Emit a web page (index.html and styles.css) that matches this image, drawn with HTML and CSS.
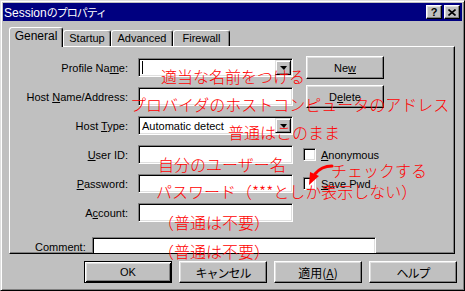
FILE: index.html
```html
<!DOCTYPE html>
<html lang="ja">
<head>
  <meta charset="UTF-8">
  <title>Sessionのプロパティ</title>
  <link rel="stylesheet" href="styles.css">
</head>
<body>
  <div class="window">
    <div class="titlebar">
      <span class="title">Session<span class="title-jp">のプロパティ</span></span>
      <div class="title-buttons">
        <span class="tbtn">?</span>
        <span class="tbtn">
          <svg width="8" height="7" viewBox="0 0 8 7"><path d="M0.5 0.5 L7.5 6.5 M7.5 0.5 L0.5 6.5" stroke="#000" stroke-width="1.6"/></svg>
        </span>
      </div>
    </div>

    <div class="tabs">
      <div class="tab active tab-general">General</div>
      <div class="tab tab-startup">Startup</div>
      <div class="tab tab-advanced">Advanced</div>
      <div class="tab tab-firewall">Firewall</div>
    </div>

    <div class="panel">
      <div class="form">
        <label>Profile Na<u>m</u>e:</label>
        <div class="field combo">
          <span class="caret"></span>
          <span class="value"></span>
          <span class="drop"><span class="arrow"></span></span>
        </div>
        <button class="btn side">Ne<u>w</u></button>

        <label>Host <u>N</u>ame/Address:</label>
        <div class="field"></div>
        <button class="btn side">D<u>e</u>lete</button>

        <label>Host <u>T</u>ype:</label>
        <div class="field combo">
          <span class="value">Automatic detect</span>
          <span class="drop"><span class="arrow"></span></span>
        </div>

        <label><u>U</u>ser ID:</label>
        <div class="field"></div>
        <div class="check side"><span class="box"></span><span><u>A</u>nonymous</span></div>

        <label><u>P</u>assword:</label>
        <div class="field"></div>
        <div class="check side"><span class="box"></span><span><u>S</u>ave Pwd</span></div>

        <label>A<u>c</u>count:</label>
        <div class="field"></div>
      </div>

      <div class="comment-row">
        <label>Comment:</label>
        <div class="field comment"></div>
      </div>
    </div>

    <div class="buttons">
      <button class="btn default">OK</button>
      <button class="btn jp">キャンセル</button>
      <button class="btn jp apply">適用(<u>A</u>)</button>
      <button class="btn jp">ヘルプ</button>
    </div>

    <!-- 手書きの注釈 -->
    <span class="note" style="left:160px; top:67px">適当な名前をつける</span>
    <span class="note" style="left:129px; top:95px">プロバイダのホストコンピュータのアドレス</span>
    <span class="note" style="left:227px; top:123px">普通はこのまま</span>
    <span class="note" style="left:157px; top:155px">自分のユーザー名</span>
    <span class="note" style="left:330px; top:161px">チェックする</span>
    <span class="note" style="left:155px; top:182px">パスワード（***としか表示しない）</span>
    <span class="note" style="left:157px; top:213px">（普通は不要）</span>
    <span class="note" style="left:157px; top:242px">（普通は不要）</span>
    <svg class="note-arrow" width="40" height="30" viewBox="0 0 40 30">
      <path d="M32 6 C25 6 19 9 15 14" fill="none" stroke="#f00" stroke-width="3" stroke-linecap="round"/>
      <polygon points="10,12 19,16 9,25" fill="#f00"/>
    </svg>
  </div>
</body>
</html>
```

FILE: styles.css
```css
body {
  margin: 0;
  background-color: #c0c0c0;
  font-family: "Liberation Sans", Arial, sans-serif;
  font-size: 11px;
  color: #000;
}
.window {
  position: relative;
  width: 465px;
  height: 291px;
  box-sizing: border-box;
  background-color: #c0c0c0;
  border: 1px solid;
  border-color: #dfdfdf #000 #000 #dfdfdf;
  box-shadow: inset 1px 1px #fff, inset -1px -1px #808080;
  padding: 2px;
}
.titlebar {
  height: 18px;
  background-color: #000080;
  color: white;
  display: flex;
  align-items: center;
  justify-content: space-between;
  padding: 0 2px 0 1px;
}
.title {
  font-size: 12px;
  line-height: 14px;
}
.title-jp {
  font-family: "Noto Sans CJK JP", sans-serif;
  font-size: 11px;
  letter-spacing: -1px;
}
.title-buttons {
  display: flex;
  gap: 2px;
}
.tbtn {
  width: 16px;
  height: 14px;
  box-sizing: border-box;
  display: flex;
  align-items: center;
  justify-content: center;
  background-color: #c0c0c0;
  color: #000;
  font-weight: bold;
  font-size: 11px;
  border: 1px solid;
  border-color: #fff #000 #000 #fff;
  box-shadow: inset -1px -1px #808080, inset 1px 1px #dfdfdf;
}
.tabs {
  display: flex;
  align-items: flex-end;
  height: 19px;
  margin: 6px 0 0 6px;
}
.tab {
  height: 16px;
  box-sizing: border-box;
  padding-top: 1px;
  line-height: 13px;
  text-align: center;
  border: 1px solid;
  border-bottom: none;
  border-color: #fff #000 #000 #fff;
  border-radius: 3px 3px 0 0;
  box-shadow: inset -1px 0 #808080;
}
.tab.active {
  position: relative;
  z-index: 1;
  height: 20px;
  margin-bottom: -1px;
  padding-top: 2px;
  background-color: #c0c0c0;
  font-size: 12px;
}
.tab-general { width: 54px; }
.tab-startup { width: 48px; }
.tab-advanced { width: 62px; }
.tab-firewall { width: 57px; }
.panel {
  width: 446px;
  height: 208px;
  box-sizing: border-box;
  margin-left: 6px;
  padding-top: 11px;
  overflow: hidden;
  border: 1px solid;
  border-color: #fff #000 #000 #fff;
  box-shadow: inset -1px -1px #808080;
}
.form {
  display: grid;
  grid-template-columns: 118px 155px auto;
  grid-template-rows: repeat(6, 19px);
  column-gap: 10px;
  row-gap: 10px;
  align-items: center;
}
.form label {
  grid-column: 1;
  text-align: right;
}
.side {
  grid-column: 3;
  justify-self: start;
}
u {
  text-underline-offset: 1px;
}
.field {
  height: 19px;
  box-sizing: border-box;
  display: flex;
  align-items: center;
  padding-left: 3px;
  background-color: #fff;
  border: 1px solid;
  border-color: #808080 #fff #fff #808080;
  box-shadow: inset 1px 1px #000, inset -1px -1px #dfdfdf;
}
.value {
  flex: 1;
  white-space: nowrap;
}
.caret {
  width: 1px;
  height: 13px;
  background-color: #000;
}
.drop {
  width: 16px;
  height: 15px;
  box-sizing: border-box;
  margin-right: 1px;
  display: flex;
  align-items: center;
  justify-content: center;
  background-color: #c0c0c0;
  border: 1px solid;
  border-color: #dfdfdf #000 #000 #dfdfdf;
  box-shadow: inset 1px 1px #fff, inset -1px -1px #808080;
}
.arrow {
  width: 0;
  height: 0;
  border-left: 4px solid transparent;
  border-right: 3px solid transparent;
  border-top: 4px solid #000;
}
.btn {
  font: inherit;
  color: #000;
  padding: 0;
  background-color: #c0c0c0;
  border: 1px solid;
  border-color: #fff #000 #000 #fff;
  box-shadow: inset -1px -1px #808080, inset 1px 1px #dfdfdf;
}
.side.btn {
  width: 78px;
  height: 23px;
  margin-left: 3px;
}
.check {
  display: flex;
  align-items: center;
  gap: 5px;
}
.box {
  width: 13px;
  height: 13px;
  box-sizing: border-box;
  background-color: #fff;
  border: 1px solid;
  border-color: #808080 #fff #fff #808080;
  box-shadow: inset 1px 1px #000, inset -1px -1px #dfdfdf;
}
.comment-row {
  display: flex;
  align-items: center;
  margin-top: 15px;
  padding-left: 25px;
}
.comment-row label {
  width: 57px;
}
.field.comment {
  width: 284px;
}
.buttons {
  display: flex;
  gap: 7px;
  margin: 7px 0 0 81px;
}
.buttons .btn {
  width: 88px;
  height: 22px;
}
.btn.default {
  border-color: #000;
  box-shadow: inset 1px 1px #fff, inset -1px -1px #000, inset 2px 2px #dfdfdf, inset -2px -2px #808080;
}
.btn.jp {
  font-family: "Noto Sans CJK JP", sans-serif;
  font-size: 12px;
  letter-spacing: -1px;
}
.btn.apply {
  letter-spacing: 0;
}
.note {
  position: absolute;
  color: #f00;
  font-family: "Noto Sans CJK JP", sans-serif;
  font-size: 16px;
  font-weight: 300;
  line-height: 16px;
  white-space: nowrap;
}
.note-arrow {
  position: absolute;
  left: 299px;
  top: 159px;
}
```
